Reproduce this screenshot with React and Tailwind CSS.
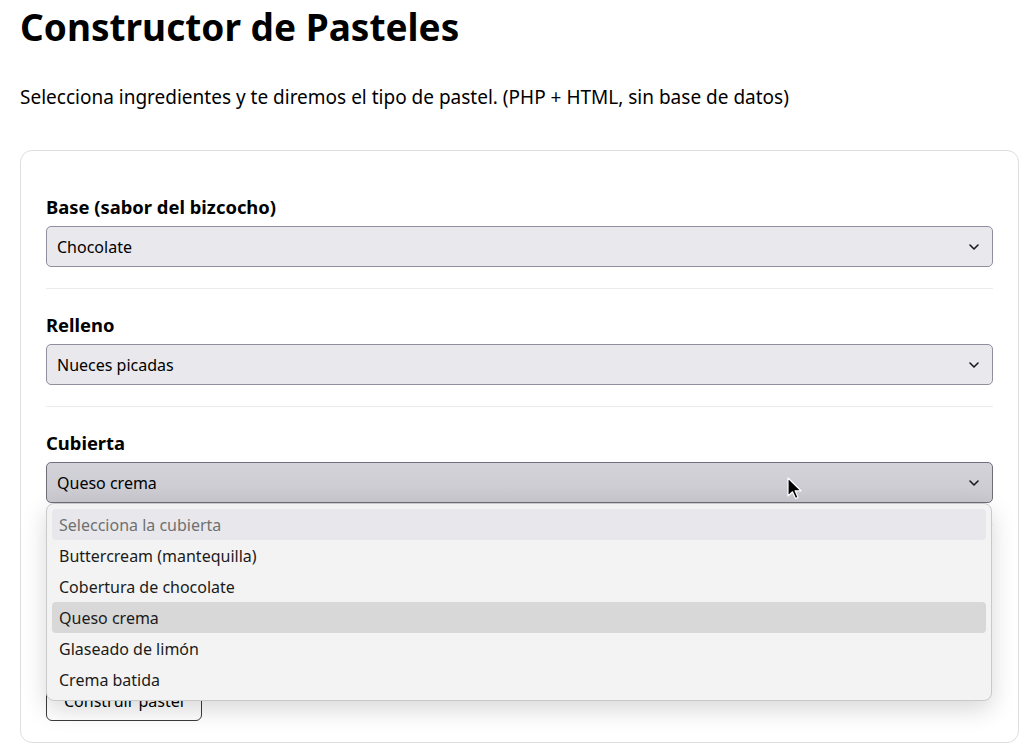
import { useState } from "react";

const fields = [
  { key: "base", label: "Base (sabor del bizcocho)", value: "Chocolate" },
  { key: "relleno", label: "Relleno", value: "Nueces picadas" },
  { key: "cubierta", label: "Cubierta", value: "Queso crema", open: true },
];

const cubiertas = [
  "Selecciona la cubierta",
  "Buttercream (mantequilla)",
  "Cobertura de chocolate",
  "Queso crema",
  "Glaseado de limón",
  "Crema batida",
];

function Chevron() {
  return (
    <svg width="10" height="6" viewBox="0 0 10 6" fill="none">
      <path d="M1 1l4 4 4-4" stroke="#1a1a1a" strokeWidth="1.6" strokeLinecap="round" strokeLinejoin="round" />
    </svg>
  );
}

function Cursor() {
  return (
    <svg width="16" height="24" viewBox="0 0 16 24" className="absolute left-[741px] top-[15px]">
      <path d="M1 1v18l4.5-4.2 3 6.8 2.6-1.2-3-6.6H14L1 1z" fill="#000" stroke="#fff" strokeWidth="1.2" strokeLinejoin="round" />
    </svg>
  );
}

function Field({ field, selected }) {
  return (
    <div className="relative">
      <label className="block text-[18.4px] font-bold leading-[24px] mb-[7px]">{field.label}</label>
      <div className="relative">
        <div
          className={`flex h-[41px] w-full items-center justify-between rounded-[5px] border px-[10px] text-[16px] ${
            field.open
              ? "border-[#6f6f7a] bg-gradient-to-b from-[#d3d3d9] to-[#c9c9cf]"
              : "border-[#8f8f9d] bg-[#e9e8ed]"
          }`}
        >
          <span>{field.key === "cubierta" ? selected : field.value}</span>
          <span className="mr-[3px]">
            <Chevron />
          </span>
        </div>
        {field.open && (
          <>
            <Cursor />
            <div className="absolute left-0 right-[1px] top-[41px] z-10 rounded-[8px] border border-[#c9c9c9] bg-[#f3f3f3] p-[5px] shadow-[0_8px_24px_rgba(0,0,0,0.16)]">
              {cubiertas.map((c, i) => (
                <div
                  key={c}
                  className={`flex h-[31px] items-center rounded-[4px] px-[7px] text-[16px] ${
                    i === 0 ? "bg-[#e8e8ec] text-[#707070]" : "text-[#1b1b1b]"
                  } ${c === selected ? "bg-[#d8d8d8]" : ""}`}
                >
                  {c}
                </div>
              ))}
            </div>
          </>
        )}
      </div>
    </div>
  );
}

export default function App() {
  const [selected] = useState("Queso crema");

  return (
    <div className="min-h-screen bg-white pl-5 pr-4 font-['Noto_Sans',sans-serif] text-black">
      <h1 className="pt-[3px] text-[37px] font-bold leading-[48px]">Constructor de Pasteles</h1>
      <p className="mt-[32px] text-[19px] leading-[28px]">
        Selecciona ingredientes y te diremos el tipo de pastel. (PHP + HTML, sin base de datos)
      </p>

      <form className="mt-[39px] rounded-[12px] border border-[#dedede] px-[25px] pt-[44px] pb-[21px]">
        {fields.map((field, i) => (
          <div key={field.key}>
            <Field field={field} selected={selected} />
            <div className={`border-t border-[#ececec] ${i < fields.length - 1 ? "mt-[21px] mb-[24px]" : "mt-[21px] mb-[156px]"}`} />
          </div>
        ))}
        <button
          type="button"
          className="h-[40px] rounded-[6px] border border-[#3b3b3b] bg-white px-[17px] text-[16px]"
        >
          Construir pastel
        </button>
      </form>
    </div>
  );
}
